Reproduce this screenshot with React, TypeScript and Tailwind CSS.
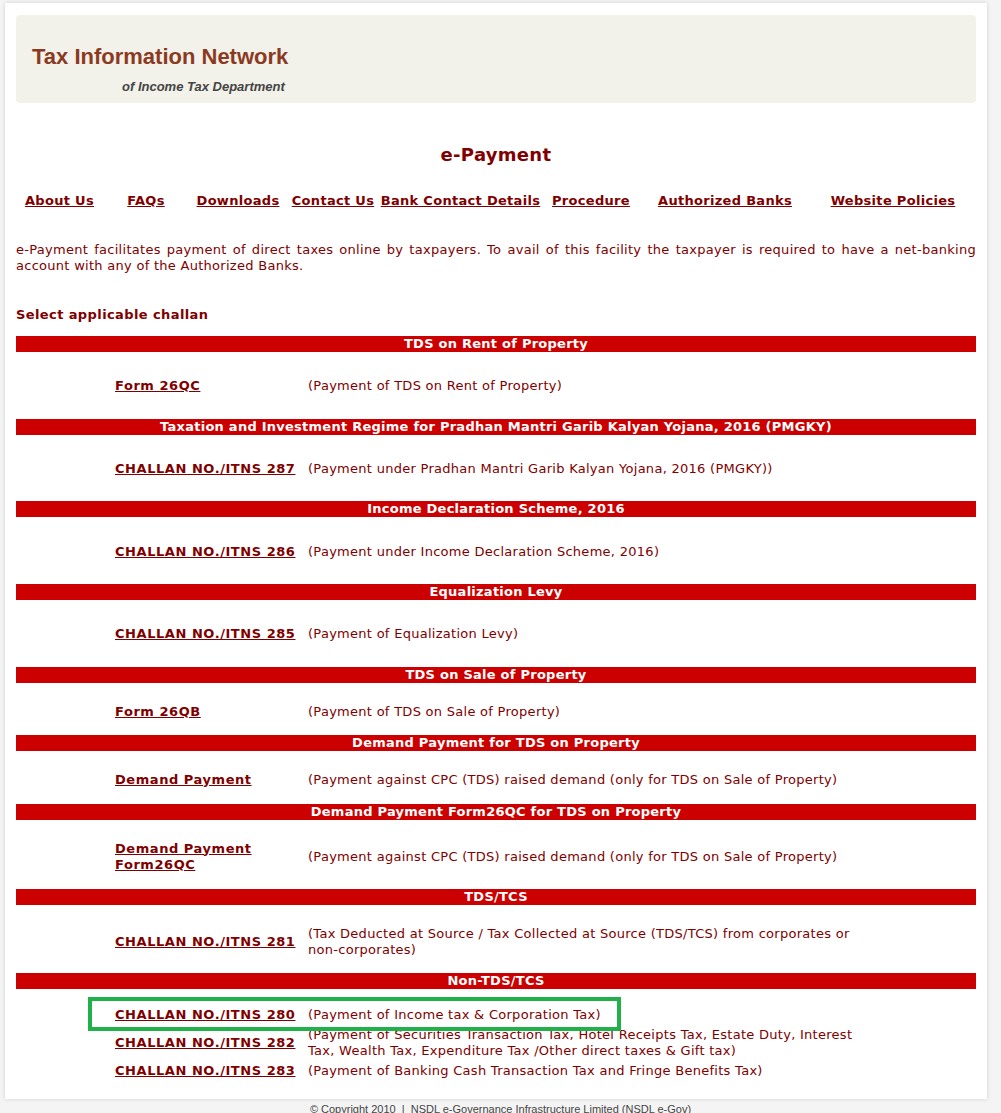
import React from 'react';

type Row = { link: string; desc: string };
type Section = { title: string; gap: string; rows: Row[] };

const navLinks: { label: string; w: string }[] = [
  { label: 'About Us', w: 'w-[87px]' },
  { label: 'FAQs', w: 'w-[86px]' },
  { label: 'Downloads', w: 'w-[98px]' },
  { label: 'Contact Us', w: 'w-[92px]' },
  { label: 'Bank Contact Details', w: 'w-[163px]' },
  { label: 'Procedure', w: 'w-[98px]' },
  { label: 'Authorized Banks', w: 'w-[170px]' },
  { label: 'Website Policies', w: 'w-[166px]' },
];

const cpcDesc = '(Payment against CPC (TDS) raised demand (only for TDS on Sale of Property)';

// gap = space between one red bar and the next, row sits a touch below centre
const sections: Section[] = [
  {
    title: 'TDS on Rent of Property',
    gap: 'h-[67px]',
    rows: [{ link: 'Form 26QC', desc: '(Payment of TDS on Rent of Property)' }],
  },
  {
    title: 'Taxation and Investment Regime for Pradhan Mantri Garib Kalyan Yojana, 2016 (PMGKY)',
    gap: 'h-[66px] pt-[2px]',
    rows: [
      {
        link: 'CHALLAN NO./ITNS 287',
        desc: '(Payment under Pradhan Mantri Garib Kalyan Yojana, 2016 (PMGKY))',
      },
    ],
  },
  {
    title: 'Income Declaration Scheme, 2016',
    gap: 'h-[67px] pt-[2px]',
    rows: [{ link: 'CHALLAN NO./ITNS 286', desc: '(Payment under Income Declaration Scheme, 2016)' }],
  },
  {
    title: 'Equalization Levy',
    gap: 'h-[67px]',
    rows: [{ link: 'CHALLAN NO./ITNS 285', desc: '(Payment of Equalization Levy)' }],
  },
  {
    title: 'TDS on Sale of Property',
    gap: 'h-[52px] pt-[5px]',
    rows: [{ link: 'Form 26QB', desc: '(Payment of TDS on Sale of Property)' }],
  },
  {
    title: 'Demand Payment for TDS on Property',
    gap: 'h-[53px] pt-[5px]',
    rows: [{ link: 'Demand Payment', desc: cpcDesc }],
  },
  {
    title: 'Demand Payment Form26QC for TDS on Property',
    gap: 'h-[69px] pt-[4px]',
    rows: [{ link: 'Demand Payment Form26QC', desc: cpcDesc }],
  },
  {
    title: 'TDS/TCS',
    gap: 'h-[68px] pt-[5px]',
    rows: [
      {
        link: 'CHALLAN NO./ITNS 281',
        desc: '(Tax Deducted at Source / Tax Collected at Source (TDS/TCS) from corporates or non-corporates)',
      },
    ],
  },
];

const nonTds: Row[] = [
  { link: 'CHALLAN NO./ITNS 280', desc: '(Payment of Income tax & Corporation Tax)' },
  {
    link: 'CHALLAN NO./ITNS 282',
    desc: '(Payment of Securities Transaction Tax, Hotel Receipts Tax, Estate Duty, Interest Tax, Wealth Tax, Expenditure Tax /Other direct taxes & Gift tax)',
  },
  { link: 'CHALLAN NO./ITNS 283', desc: '(Payment of Banking Cash Transaction Tax and Fringe Benefits Tax)' },
];

function Bar({ title }: { title: string }) {
  return (
    <div className="h-[16px] whitespace-nowrap bg-[#cc0000] text-center text-[13px] font-bold leading-[16px] tracking-[0.25px] text-white">
      {title}
    </div>
  );
}

function ChallanRow({ row }: { row: Row }) {
  return (
    <div className="flex items-center pl-[99px]">
      <a href="#" className="w-[193px] shrink-0 pr-[8px] font-bold tracking-[0.55px] text-[#800000] underline">
        {row.link}
      </a>
      <div className="w-[550px] text-[#800000]">{row.desc}</div>
    </div>
  );
}

export default function App() {
  return (
    <div className="min-h-[1113px] bg-[#f4f4f4] pt-[3px] font-['DejaVu_Sans',Verdana,sans-serif] text-[13px] leading-[16px] tracking-[0.28px]">
      <div className="ml-[5px] w-[982px] bg-white px-[11px] pt-[12px] pb-[16px] shadow-[0_0_4px_rgba(0,0,0,0.15)]">
        {/* header */}
        <div className="h-[88px] rounded-[4px] bg-[#f2f1ea] pl-[16px] pt-[28px] font-['Liberation_Sans',Arial,sans-serif] tracking-normal">
          <div className="text-[22px] leading-[28px] font-bold text-[#8b3a1f]">Tax Information Network</div>
          <div className="mt-[8px] pl-[90px] text-[13px] leading-[16px] font-bold italic text-[#444444]">
            of Income Tax Department
          </div>
        </div>

        <h1 className="mt-[41px] text-center text-[18px] leading-[22px] font-bold tracking-[0.3px] text-[#800000]">
          e-Payment
        </h1>

        <nav className="mt-[27px] flex">
          {navLinks.map((n) => (
            <div key={n.label} className={`${n.w} shrink-0 whitespace-nowrap text-center`}>
              <a href="#" className="font-bold tracking-[0.3px] text-[#800000] underline">
                {n.label}
              </a>
            </div>
          ))}
        </nav>

        <p className="mt-[33px] text-justify text-[#800000]">
          e-Payment facilitates payment of direct taxes online by taxpayers. To avail of this facility the taxpayer is
          required to have a net-banking account with any of the Authorized Banks.
        </p>

        <div className="mt-[33px] font-bold tracking-[0.4px] text-[#800000]">Select applicable challan</div>

        <div className="mt-[13px]">
          {sections.map((s) => (
            <div key={s.title}>
              <Bar title={s.title} />
              <div className={`${s.gap} flex items-center`}>
                <div className="w-full">
                  {s.rows.map((r) => (
                    <ChallanRow key={r.link} row={r} />
                  ))}
                </div>
              </div>
            </div>
          ))}

          <Bar title="Non-TDS/TCS" />
          <div className="relative pt-[14px]">
            {nonTds.map((r) => (
              <div key={r.link} className="flex min-h-[24px] items-center">
                <div className="w-full">
                  <ChallanRow row={r} />
                </div>
              </div>
            ))}
            <div className="pointer-events-none absolute top-[8px] left-[72px] h-[34px] w-[533px] border-[4px] border-[#22b04b]" />
          </div>
        </div>
      </div>

      <div className="mt-[3px] text-center font-['Liberation_Sans',Arial,sans-serif] text-[11px] leading-[14px] tracking-normal text-[#444444]">
        © Copyright 2010 &nbsp;|&nbsp; NSDL e-Governance Infrastructure Limited (NSDL e-Gov)
      </div>
    </div>
  );
}
